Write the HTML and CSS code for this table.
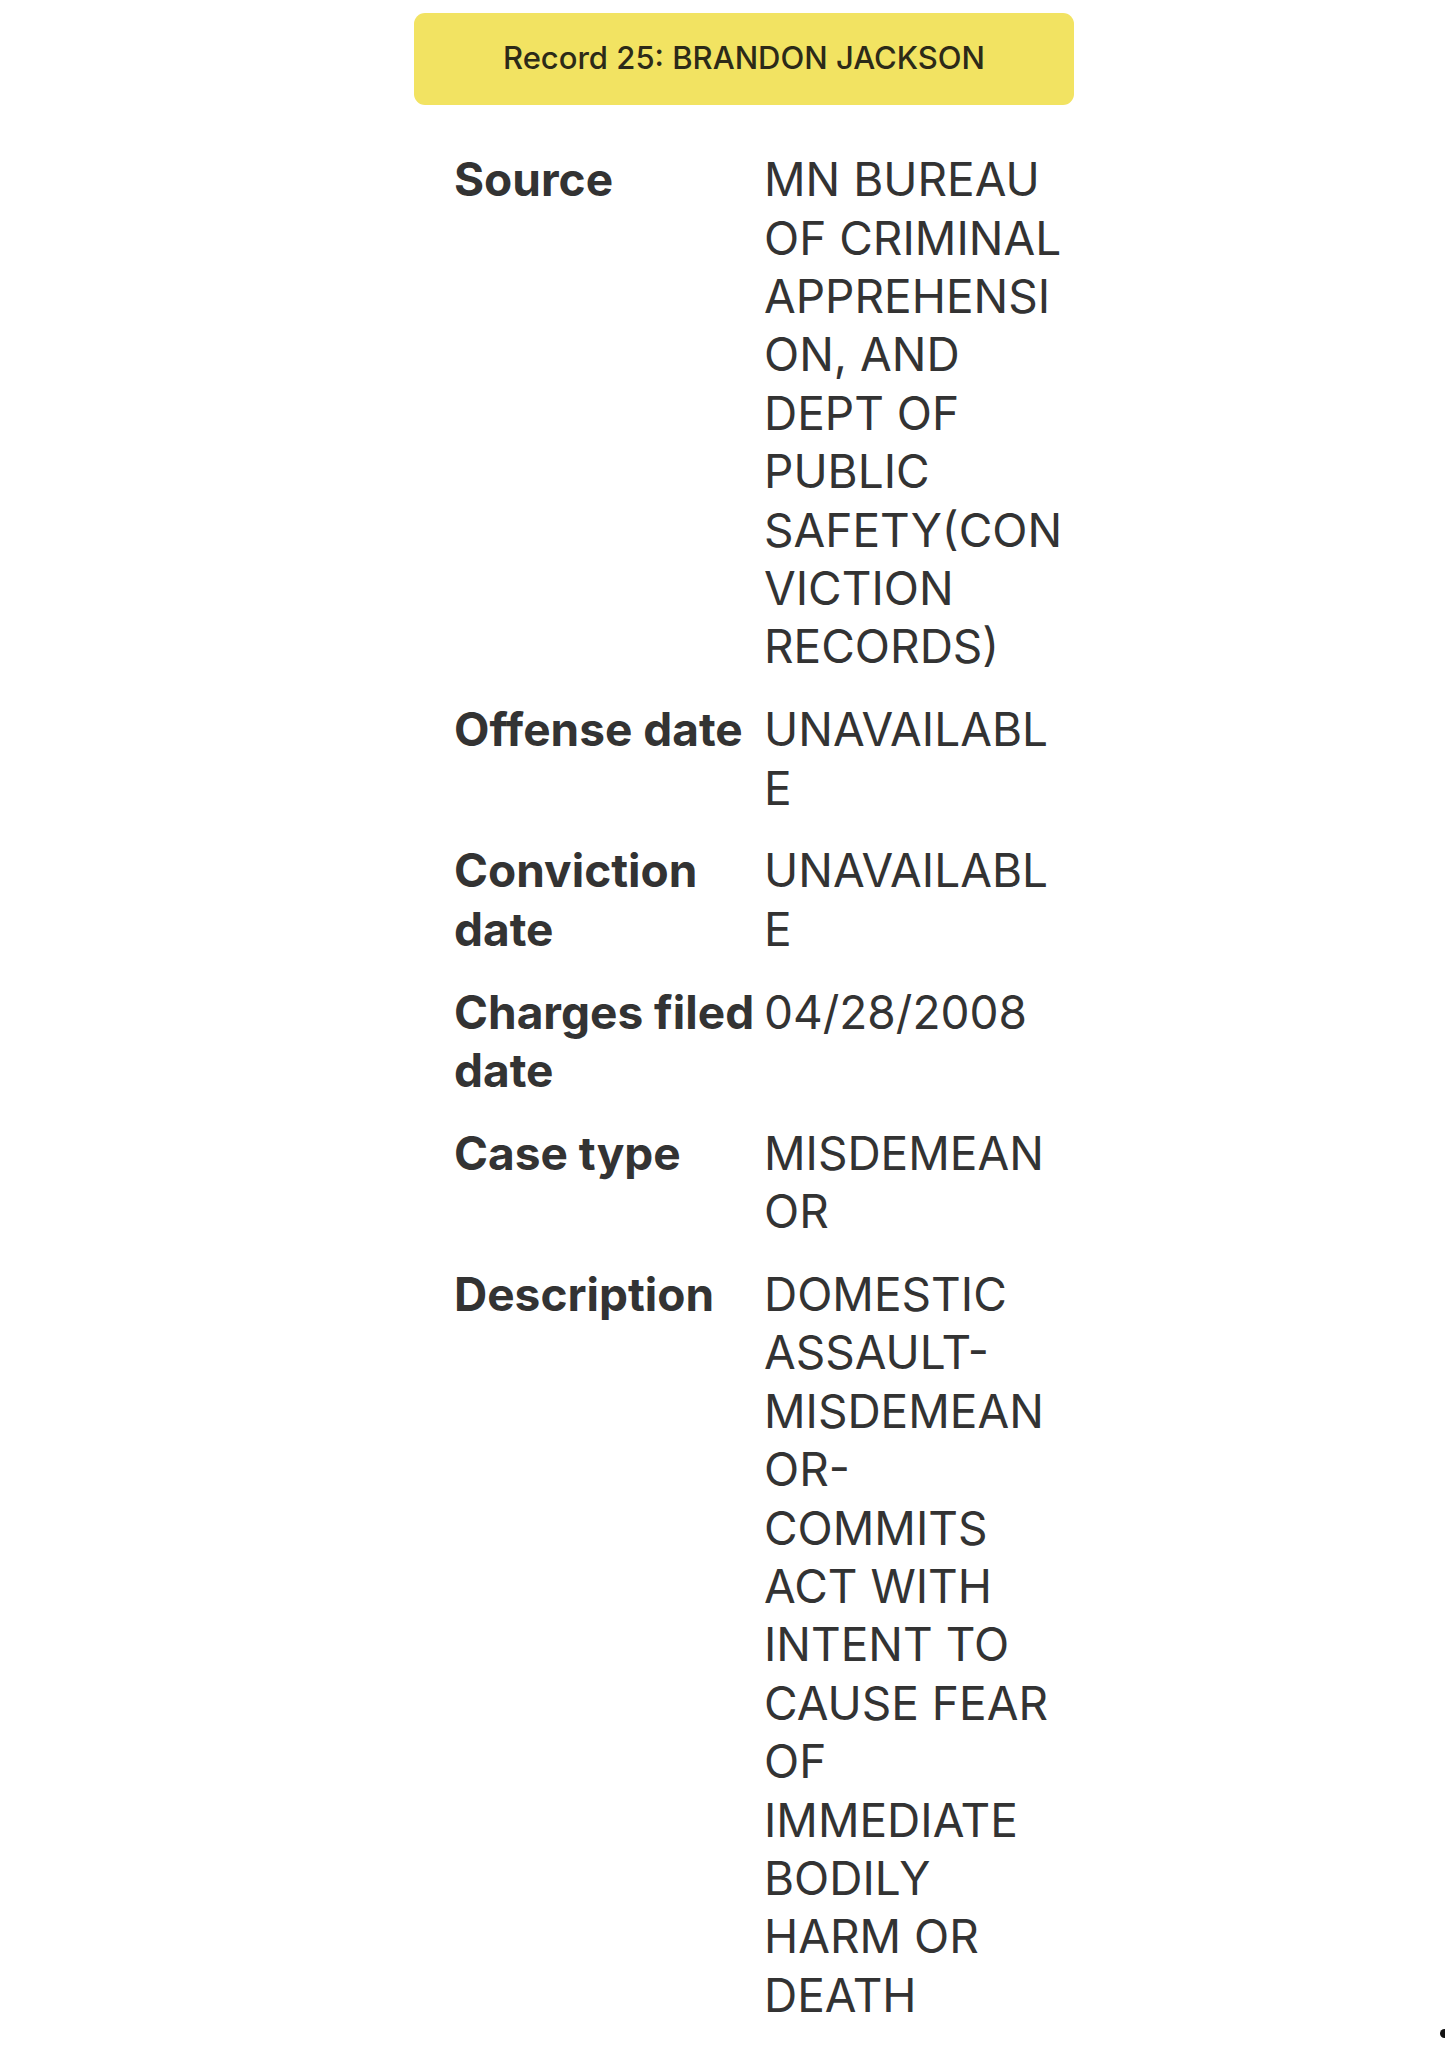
FILE: index.html
```html
<!DOCTYPE html>
<html lang="en">
<head>
<meta charset="utf-8">
<title>Record 25: BRANDON JACKSON</title>
<link rel="stylesheet" href="styles.css">
</head>
<body>
<div class="record">
  <div class="record-header">Record 25: BRANDON JACKSON</div>
  <dl class="record-fields">
    <div class="field">
      <dt class="field-label">Source</dt>
      <dd class="field-value">MN BUREAU OF CRIMINAL APPREHENSION, AND DEPT OF PUBLIC SAFETY(CONVICTION RECORDS)</dd>
    </div>
    <div class="field">
      <dt class="field-label">Offense date</dt>
      <dd class="field-value">UNAVAILABLE</dd>
    </div>
    <div class="field">
      <dt class="field-label">Conviction date</dt>
      <dd class="field-value">UNAVAILABLE</dd>
    </div>
    <div class="field">
      <dt class="field-label">Charges filed date</dt>
      <dd class="field-value">04/28/2008</dd>
    </div>
    <div class="field">
      <dt class="field-label">Case type</dt>
      <dd class="field-value">MISDEMEANOR</dd>
    </div>
    <div class="field">
      <dt class="field-label">Description</dt>
      <dd class="field-value">DOMESTIC ASSAULT-MISDEMEANOR-COMMITS ACT WITH INTENT TO CAUSE FEAR OF IMMEDIATE BODILY HARM OR DEATH</dd>
    </div>
  </dl>
</div>
<div class="scroll-dot"></div>
</body>
</html>
```
FILE: styles.css
```css
html, body {
  margin: 0;
  padding: 0;
  background: #ffffff;
}

body {
  position: relative;
  min-height: 2046px;
  font-family: "Inter", "Roboto", "Liberation Sans", sans-serif;
  color: #333333;
}

.record {
  width: 660px;
  margin-left: 414px;
  padding-top: 13px;
}

.record-header {
  box-sizing: border-box;
  height: 92px;
  padding-bottom: 4px;
  background: #f2e362;
  border-radius: 11px;
  display: flex;
  align-items: center;
  justify-content: center;
  font-size: 31px;
  font-weight: 500;
  color: #2c2a18;
}

.record-fields {
  margin: 33px 0 0 40px;
  padding: 0;
}

.field {
  display: grid;
  grid-template-columns: 304px 306px;
  column-gap: 6px;
  padding: 12.2px 0;
  font-size: 46px;
  line-height: 58.4px;
}

.field-label {
  margin: 0;
  font-weight: 700;
  color: #333333;
}

.field-value {
  margin: 0;
  font-weight: 400;
  color: #333333;
  overflow-wrap: anywhere;
}

.scroll-dot {
  position: absolute;
  top: 2029px;
  left: 1440px;
  width: 9px;
  height: 9px;
  border-radius: 50%;
  background: #111111;
}
```
